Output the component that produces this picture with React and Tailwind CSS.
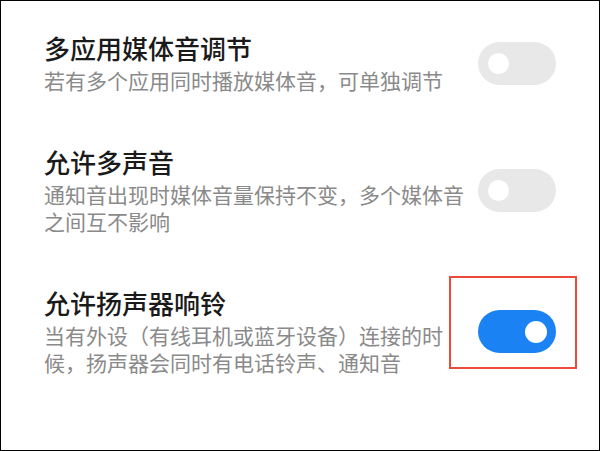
const settings = [
  {
    id: 'multi-app',
    title: '多应用媒体音调节',
    lines: ['若有多个应用同时播放媒体音，可单独调节'],
    on: false,
  },
  {
    id: 'multi-sound',
    title: '允许多声音',
    lines: ['通知音出现时媒体音量保持不变，多个媒体音', '之间互不影响'],
    on: false,
  },
  {
    id: 'speaker-ring',
    title: '允许扬声器响铃',
    lines: ['当有外设（有线耳机或蓝牙设备）连接的时', '候，扬声器会同时有电话铃声、通知音'],
    on: true,
    highlight: true,
  },
];

function Toggle({ on, highlight }) {
  return (
    <div className="relative shrink-0">
      <div
        className={`flex items-center w-[78px] h-[43px] rounded-full ${
          on ? 'bg-[#1a82f2] justify-end pr-[9px]' : 'bg-[#e8e8e8] pl-[10px]'
        }`}
      >
        <div className={`rounded-full bg-white ${on ? 'w-[22px] h-[22px]' : 'w-[21px] h-[21px]'}`} />
      </div>
      {highlight && (
        <div className="absolute left-[-29px] top-[-34px] w-[128px] h-[93px] border-2 border-[#ec4a38]" />
      )}
    </div>
  );
}

export default function App() {
  return (
    <div
      className="w-[600px] h-[451px] bg-white border border-black pl-[43px] pr-[43px] pt-[31px] flex flex-col gap-[52px]"
      style={{ fontFamily: '"Noto Sans CJK SC", "Noto Sans", sans-serif' }}
    >
      {settings.map((s) => (
        <div key={s.id} className="flex items-center justify-between">
          <div>
            <p className="text-[26px] leading-[32px] font-medium text-[#1a1a1a]">{s.title}</p>
            {/* explicit breaks so wrapping matches the screenshot */}
            <p className="mt-[3px] text-[21px] leading-[27px] text-[#8a8a8a] whitespace-nowrap">
              {s.lines.map((l, i) => (
                <span key={l}>
                  {i > 0 && <br />}
                  {l}
                </span>
              ))}
            </p>
          </div>
          <Toggle on={s.on} highlight={s.highlight} />
        </div>
      ))}
    </div>
  );
}
